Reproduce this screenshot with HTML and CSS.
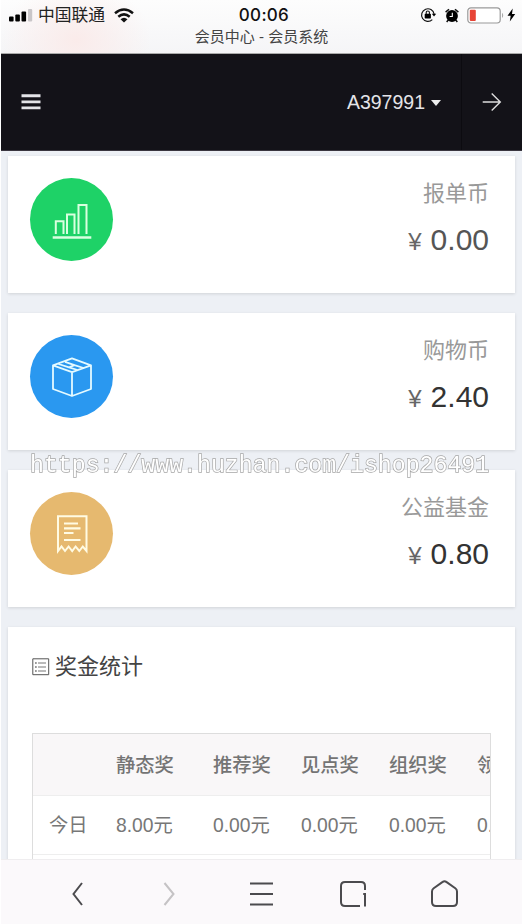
FILE: index.html
```html
<!DOCTYPE html>
<html lang="zh-CN">
<head>
<meta charset="utf-8">
<meta name="viewport" content="width=device-width, initial-scale=1">
<title>会员中心 - 会员系统</title>
<link rel="stylesheet" href="styles.css">
</head>
<body>
<div class="phone">
  <header class="status">
    <div class="status-row">
      <div class="carrier">
        <svg width="24" height="14" viewBox="0 0 24 14"><rect x="0" y="8.5" width="4.6" height="5" rx="1"/><rect x="6.3" y="6.5" width="4.6" height="7" rx="1"/><rect x="12.5" y="3.5" width="4.6" height="10" rx="1"/><rect x="19" y="1" width="4.2" height="12.5" rx="1" fill="#c9c6c8"/></svg>
        <span class="carrier-name">中国联通</span>
        <svg class="wifi" width="20" height="15" viewBox="0 0 20 15" fill="none" stroke="#111" stroke-width="2.5"><path d="M1 5.2Q10-2.2 19 5.2M4.3 8.8Q10 4 15.7 8.8"/><path d="M6.5 11.2Q10 8.2 13.5 11.2L10 14.5Z" fill="#111" stroke="none"/></svg>
      </div>
      <time class="clock">00:06</time>
      <div class="indicators">
        <svg width="17" height="16" viewBox="0 0 17 16"><path d="M12.3 12.6A6.3 6.3 0 1 1 14.1 7" fill="none" stroke="#111" stroke-width="1.2"/><path d="M11.8 6.8H16.2L14 9.6Z"/><rect x="4.7" y="6.8" width="6.2" height="4.6" rx=".6"/><path d="M6.2 7V5.6a1.6 1.6 0 0 1 3.2 0V7" fill="none" stroke="#111" stroke-width="1.1"/></svg>
        <svg class="alarm" width="14" height="15" viewBox="0 0 14 15"><circle cx="7" cy="8" r="5.9"/><path d="M.6 4.1L4 1.2M13.4 4.1L10 1.2M3.2 12L1.7 14M10.8 12l1.5 2" stroke="#111" stroke-width="1.5"/><path d="M7.3 4.8v3.7H4.6" fill="none" stroke="#fff" stroke-width="1.1"/></svg>
        <svg class="battery" width="38" height="17" viewBox="0 0 38 17"><rect x=".8" y=".8" width="32.4" height="15.2" rx="3.2" fill="#fff" stroke="#999" stroke-width="1.2"/><rect x="2.8" y="2.8" width="6" height="11.2" rx="1" fill="#e74436"/><path d="M35.2 5.8q2 2.6 0 5.2z" fill="#999"/></svg>
        <svg class="bolt" width="9" height="14" viewBox="0 0 9 14"><path d="M5.7.6L.5 7.8h3.2L2.8 13.4 8.2 5.9H5Z"/></svg>
      </div>
    </div>
    <div class="page-title">会员中心 - 会员系统</div>
  </header>

  <nav class="navbar">
    <svg class="menu" width="20" height="16" viewBox="0 0 20 16" fill="#e4e4e8"><path d="M.5.3h19v3H.5zM.5 6.5h19v2.8H.5zM.5 12.5h19v2.8H.5z"/></svg>
    <div class="user"><span>A397991</span><i class="caret"></i></div>
    <div class="logout"><svg width="20" height="20" viewBox="0 0 20 20" fill="none" stroke="#ddd" stroke-width="1.4"><path d="M.7 10H18.3M9.7 1.4L18.3 10 9.7 18.6"/></svg></div>
  </nav>

  <main class="content">
    <section class="card">
      <div class="badge green"><svg width="40" height="40" viewBox="0 0 40 40" fill="none" stroke="#d9ffdf" stroke-width="2"><path d="M.7 37.5H39.3" stroke-width="2.4"/><path d="M3.8 34V21.2H11.5V34M15 34V14.5H22.5V34M26.5 34V5H34.5V34"/></svg></div>
      <div class="figures"><div class="label">报单币</div><div class="amount soft"><span class="yen">¥</span>0.00</div></div>
    </section>
    <section class="card">
      <div class="badge blue"><svg width="40" height="40" viewBox="0 0 40 40" fill="none" stroke="#e4faff" stroke-width="1.8" stroke-linejoin="round"><path d="M1 8.3L20 1.3 39 8.3V32L20 39 1 32ZM1 8.3L20 15.2 39 8.3M20 15.2V39M6.5 7L17 10.3 22.5 8.2 13 4.9M17 10.3L25.5 13M22.5 8.2L31.5 11"/></svg></div>
      <div class="figures"><div class="label">购物币</div><div class="amount"><span class="yen">¥</span>2.40</div></div>
    </section>
    <section class="card">
      <div class="badge gold"><svg width="40" height="40" viewBox="0 0 40 40" fill="none" stroke="#fffbe3" stroke-width="2"><path d="M6 37V2.3H34.5V37L30.8 32.5 27.3 37 23.6 32.5 20.2 37 16.6 32.5 13 37 9.5 32.5Z"/><path d="M12 9.5H26M12 14.3H28.5M12 19H21.5M12 26H28.5" stroke-width="2.2"/></svg></div>
      <div class="figures"><div class="label">公益基金</div><div class="amount"><span class="yen">¥</span>0.80</div></div>
    </section>

    <section class="panel">
      <h2 class="panel-title"><svg width="18" height="18" viewBox="0 0 18 18" fill="none" stroke="#555"><path d="M.8.8H16.7V16.7H.8Z"/><path d="M6 5H14M6 9H14M6 13H14" stroke="#777"/><path d="M3.2 5h1.4M3.2 9h1.4M3.2 13h1.4" stroke-width="1.3"/></svg>奖金统计</h2>
      <div class="table-wrap">
        <table>
          <colgroup><col class="c-day"><col class="c-first"><col class="c"><col class="c"><col class="c"><col class="c"></colgroup>
          <thead><tr><th></th><th>静态奖</th><th>推荐奖</th><th>见点奖</th><th>组织奖</th><th>领导奖</th></tr></thead>
          <tbody>
            <tr><td>今日</td><td>8.00元</td><td>0.00元</td><td>0.00元</td><td>0.00元</td><td>0.00元</td></tr>
            <tr><td></td><td></td><td></td><td></td><td></td><td></td></tr>
          </tbody>
        </table>
      </div>
    </section>
  </main>

  <footer class="toolbar">
    <svg width="88" height="32" viewBox="0 0 88 32"><path d="M48 5L39.5 16 48 27"/></svg>
    <svg class="off" width="88" height="32" viewBox="0 0 88 32"><path d="M38.5 5L47.5 16 38.5 27"/></svg>
    <svg width="88" height="32" viewBox="0 0 88 32"><path d="M32 5.5H55M32 16H55M32 26.5H55"/></svg>
    <svg width="88" height="32" viewBox="0 0 88 32"><path d="M55 12V8Q55 4 51 4H35Q31 4 31 8V24Q31 28 35 28H50M53.2 16H55V28.5"/></svg>
    <svg width="88" height="32" viewBox="0 0 88 32"><path transform="translate(-4.5)" d="M36.2 10.3L45.2 3.9Q47 2.5 48.8 3.9L57.8 10.3Q59.5 11.5 59.5 13.6V24Q59.5 28 55.5 28H38.5Q34.5 28 34.5 24V13.6Q34.5 11.5 36.2 10.3Z"/></svg>
  </footer>
  <div class="watermark">https://www.huzhan.com/ishop26491</div>
</div>
</body>
</html>
```
FILE: styles.css
```css
* { box-sizing: border-box; }
body { margin: 0; background: #fff; font-family: "Liberation Sans", "Noto Sans CJK SC", sans-serif; }
svg { display: block; flex: none; }
.phone { position: relative; width: 522px; height: 924px; padding-left: 1px; display: flex; flex-direction: column; overflow: hidden; }

.status { flex: none; height: 54px; background: radial-gradient(ellipse 75px 60px at 75px 40px, #faebea, transparent), linear-gradient(#fdfdfd, #f5f5f7); border-bottom: 1px solid #aaa; }
.status-row { display: grid; grid-template-columns: 1fr auto 1fr; align-items: center; height: 30px; padding: 0 6px 0 8px; }
.carrier { display: flex; align-items: center; }
.carrier-name { margin-left: 5px; margin-top: 2px; font-size: 16.8px; line-height: 24px; color: #222; }
.wifi { margin-left: 9px; }
.clock { font: 500 17px/24px Inter, sans-serif; letter-spacing: .3px; color: #111; padding-left: 3px; }
.indicators { display: flex; align-items: center; justify-content: flex-end; }
.alarm { margin-left: 8px; }
.battery { margin-left: 8px; }
.bolt { margin-left: 2px; }
.page-title { text-align: center; font-size: 15px; line-height: 14px; color: #444; }

.navbar { flex: none; height: 97px; background: #131218; display: flex; align-items: center; border-bottom: 1px solid #3a3640; color: #e4e4e8; }
.menu { margin-left: 20px; }
.user { margin-left: auto; display: flex; align-items: center; gap: 6px; padding-right: 20px; height: 100%; border-right: 1px solid #0c0b10; font-size: 19.5px; }
.caret { border: 5.5px solid transparent; border-top: 6px solid #eee; border-bottom: 0; margin-top: 2px; }
.logout { width: 60px; display: flex; justify-content: center; }

.content { flex: 1; min-height: 0; overflow: hidden; background: #edf0f5; padding: 5px 7px 0; display: flex; flex-direction: column; gap: 20px; }
.card { flex: none; height: 137px; background: #fff; box-shadow: 0 1px 3px rgba(0, 0, 0, .12); padding: 22px 26px 0 22px; display: flex; justify-content: space-between; }
.badge { width: 83px; height: 83px; border-radius: 50%; display: flex; align-items: center; justify-content: center; }
.green { background: #1ed267; }
.blue { background: #2a98f0; }
.gold { background: #e6b96f; }
.figures { text-align: right; }
.label { margin-top: 1px; font-size: 22px; line-height: 30px; color: #999; }
.amount { margin-top: 13px; font-size: 30px; line-height: 36px; color: #333; }
.amount.soft { color: #555; }
.yen { font-size: 24px; color: #666; margin-right: 9px; }

.panel { flex: none; height: 400px; background: #fff; box-shadow: 0 1px 3px rgba(0, 0, 0, .12); padding: 24px 24px 0; }
.panel-title { margin: 0; display: flex; align-items: center; gap: 5px; font-size: 22px; line-height: 32px; font-weight: 400; color: #444; }
.table-wrap { margin-top: 50px; width: 459px; height: 300px; overflow: hidden; border: 1px solid #ddd; }
table { width: 516px; table-layout: fixed; border-collapse: collapse; color: #777; font-size: 19.3px; }
.c-day { width: 67px; }
.c-first { width: 97px; }
.c { width: 88px; }
th, td { padding: 0 0 0 16px; text-align: left; white-space: nowrap; border-bottom: 1px solid #eee; }
th { height: 61px; background: #f9f7f8; font-weight: 500; font-family: "Noto Sans CJK SC", sans-serif; color: #747474; line-height: 30px; }
td { height: 59px; padding-bottom: 2px; }

.toolbar { flex: none; height: 65px; background: #fbf9fb; border-top: 1px solid #efedef; display: flex; align-items: center; justify-content: center; padding: 3px 0 0; gap: 4px; }
.toolbar svg { fill: none; stroke: #4b4b4e; stroke-width: 2; }
.toolbar .off { stroke: #c5c3c5; }

.watermark { position: absolute; left: 30px; top: 453px; font: 23.2px/26px "Liberation Mono", monospace; color: #fff; -webkit-text-stroke: 1.4px #a6a6a6; paint-order: stroke fill; will-change: transform; white-space: nowrap; }
```
